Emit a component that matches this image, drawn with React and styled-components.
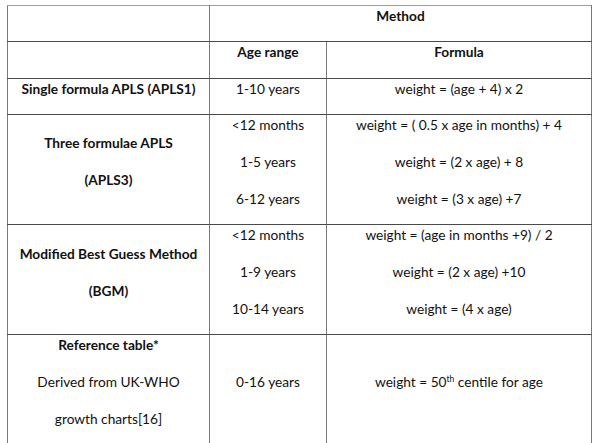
import React from "react";
import styled, { createGlobalStyle } from "styled-components";

const GlobalStyle = createGlobalStyle`
  body {
    margin: 0;
    background: #ffffff;
    font-family: Lato, "Open Sans", sans-serif;
    color: #111111;
  }
`;

const rows = [
  {
    method: ["Single formula APLS (APLS1)"],
    ages: ["1-10 years"],
    formulas: ["weight = (age + 4) x 2"],
  },
  {
    method: ["Three formulae APLS", "(APLS3)"],
    ages: ["<12 months", "1-5 years", "6-12 years"],
    formulas: [
      "weight = ( 0.5 x age in months) + 4",
      "weight = (2 x age) + 8",
      "weight = (3 x age) +7",
    ],
  },
  {
    method: ["Modified Best Guess Method", "(BGM)"],
    ages: ["<12 months", "1-9 years", "10-14 years"],
    formulas: [
      "weight = (age in months +9) / 2",
      "weight = (2 x age) +10",
      "weight = (4 x age)",
    ],
  },
];

export default function App() {
  return (
    <Page>
      <GlobalStyle />
      <Table>
        <colgroup>
          <col style={{ width: 202 }} />
          <col style={{ width: 117 }} />
          <col style={{ width: 265 }} />
        </colgroup>
        <tbody>
          <tr>
            <Cell $top />
            <Cell $top $bold colSpan={2}>
              <Line>Method</Line>
            </Cell>
          </tr>
          <tr>
            <Cell />
            <Cell $bold>
              <Line>Age range</Line>
            </Cell>
            <Cell $bold>
              <Line>Formula</Line>
            </Cell>
          </tr>
          {rows.map((row) => (
            <tr key={row.method[0]}>
              <Cell $bold>
                {row.method.map((text) => (
                  <Line key={text}>{text}</Line>
                ))}
              </Cell>
              <Cell>
                {row.ages.map((text) => (
                  <Line key={text}>{text}</Line>
                ))}
              </Cell>
              <Cell>
                {row.formulas.map((text) => (
                  <Line key={text}>{text}</Line>
                ))}
              </Cell>
            </tr>
          ))}
          <tr>
            <Cell $last>
              <Line as="b">Reference table*</Line>
              <Line>Derived from UK-WHO</Line>
              <Line>growth charts[16]</Line>
            </Cell>
            <Cell $last>
              <Line>0-16 years</Line>
            </Cell>
            <Cell $last>
              <Line>
                weight = 50<Sup>th</Sup> centile for age
              </Line>
            </Cell>
          </tr>
        </tbody>
      </Table>
    </Page>
  );
}

const Page = styled.div`
  padding: 5px 0 0 7px;
`;

const Table = styled.table`
  border-collapse: collapse;
  table-layout: fixed;
  width: 585px;
  font-size: 13.7px;
`;

const Cell = styled.td`
  border: 1px solid #7a7a7a;
  border-top-color: ${(p) => (p.$top ? "#9c9c9c" : "#4a4a4a")};
  border-bottom-color: #4a4a4a;
  padding: ${(p) => (p.$last ? "0 4px 18px" : "0 4px 15.3px")};
  text-align: center;
  vertical-align: middle;
  font-weight: ${(p) => (p.$bold ? 700 : 400)};
`;

const Line = styled.div`
  display: block;
  line-height: 20px;
  white-space: nowrap;
  & + & {
    margin-top: 17px;
  }
`;

const Sup = styled.sup`
  font-size: 8.5px;
  line-height: 0;
  vertical-align: 5px;
`;
